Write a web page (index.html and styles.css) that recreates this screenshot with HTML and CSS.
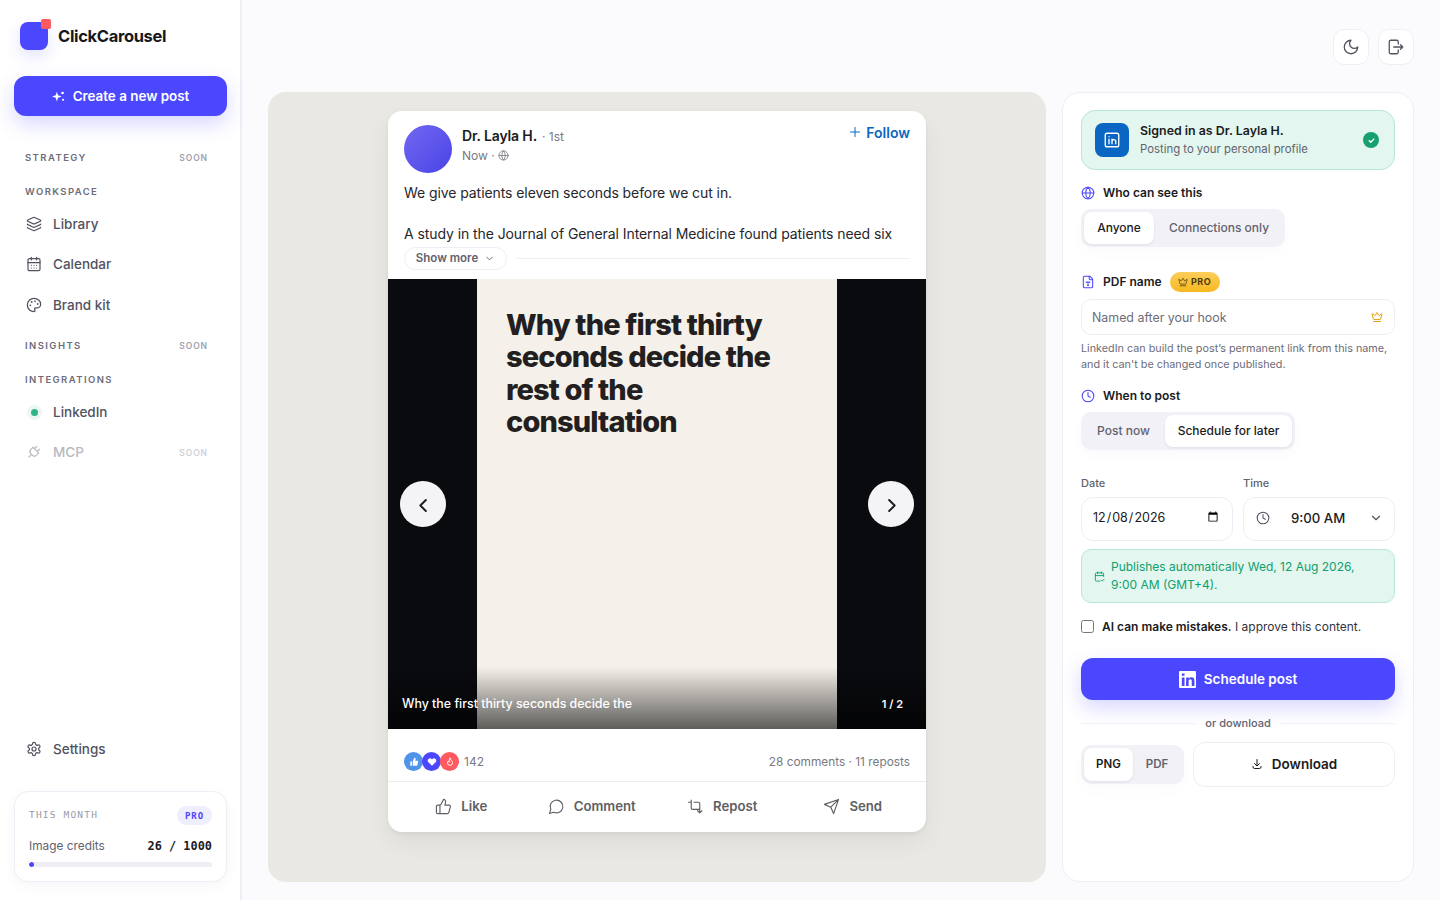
FILE: index.html
```html
<!DOCTYPE html>
<html lang="en">
<head>
<meta charset="utf-8">
<title>ClickCarousel</title>
<link rel="stylesheet" href="styles.css">
</head>
<body>
<div class="app">
  <aside class="sidebar">
    <div class="brand">
      <div class="logo"><span class="logo-dot"></span></div>
      <span class="brand-name">ClickCarousel</span>
    </div>
    <button class="create-btn">
      <svg class="ic14" viewBox="0 0 24 24"><path d="M9 3l2.100 6.900L18 12l-6.900 2.100L9 21l-2.100-6.900L0 12l6.900-2.100z"/><circle cx="19.500" cy="5.500" r="2.400"/><circle cx="20.500" cy="18" r="2"/></svg>
      Create a new post
    </button>
    <div class="section first"><span>STRATEGY</span><em>SOON</em></div>
    <div class="section"><span>WORKSPACE</span></div>
    <nav class="nav nav-work">
      <a class="nav-item">
        <svg class="nav-ic" viewBox="0 0 24 24"><path d="M12.830 2.180a2 2 0 0 0-1.660 0L2.600 6.080a1 1 0 0 0 0 1.830l8.580 3.910a2 2 0 0 0 1.660 0l8.580-3.900a1 1 0 0 0 0-1.830z"/><path d="M2 12a1 1 0 0 0 .58.91l8.600 3.910a2 2 0 0 0 1.650 0l8.580-3.900A1 1 0 0 0 22 12"/><path d="M2 17a1 1 0 0 0 .58.91l8.600 3.910a2 2 0 0 0 1.650 0l8.580-3.900A1 1 0 0 0 22 17"/></svg>
        Library</a>
      <a class="nav-item">
        <svg class="nav-ic" viewBox="0 0 24 24"><path d="M8 2v4M16 2v4"/><rect x="3" y="4" width="18" height="18" rx="2"/><path d="M3 10h18M8 14h.01M12 14h.01M16 14h.01M8 18h.01M12 18h.01M16 18h.01"/></svg>
        Calendar</a>
      <a class="nav-item">
        <svg class="nav-ic" viewBox="0 0 24 24"><circle cx="13.500" cy="6.500" r=".5"/><circle cx="17.500" cy="10.500" r=".5"/><circle cx="8.500" cy="7.500" r=".5"/><circle cx="6.500" cy="12.500" r=".5"/><path d="M12 2C6.500 2 2 6.500 2 12s4.500 10 10 10c.926 0 1.648-.746 1.648-1.688 0-.437-.18-.835-.437-1.125-.29-.289-.438-.652-.438-1.125a1.640 1.640 0 0 1 1.668-1.668h1.996c3.051 0 5.555-2.503 5.555-5.554C21.965 6.012 17.461 2 12 2z"/></svg>
        Brand kit</a>
    </nav>
    <div class="section gap-top"><span>INSIGHTS</span><em>SOON</em></div>
    <div class="section"><span>INTEGRATIONS</span></div>
    <nav class="nav nav-int">
      <a class="nav-item"><span class="dot-wrap"><span class="live-dot"></span></span>LinkedIn</a>
      <a class="nav-item disabled">
        <svg class="nav-ic" viewBox="0 0 24 24"><g transform="rotate(45 12 12)"><path d="M12 23v-6M9 8V3M15 8V3M18 8v5a4 4 0 0 1-4 4h-4a4 4 0 0 1-4-4V8Z"/></g></svg>
        MCP<em>SOON</em></a>
    </nav>
    <a class="nav-item settings">
      <svg class="nav-ic" viewBox="0 0 24 24"><path d="M12.220 2h-.44a2 2 0 0 0-2 2v.18a2 2 0 0 1-1 1.730l-.43.25a2 2 0 0 1-2 0l-.15-.08a2 2 0 0 0-2.730.73l-.22.38a2 2 0 0 0 .73 2.730l.15.1a2 2 0 0 1 1 1.720v.51a2 2 0 0 1-1 1.740l-.15.09a2 2 0 0 0-.73 2.730l.22.38a2 2 0 0 0 2.730.73l.15-.08a2 2 0 0 1 2 0l.43.25a2 2 0 0 1 1 1.730V20a2 2 0 0 0 2 2h.44a2 2 0 0 0 2-2v-.18a2 2 0 0 1 1-1.730l.43-.25a2 2 0 0 1 2 0l.15.08a2 2 0 0 0 2.730-.73l.22-.39a2 2 0 0 0-.73-2.730l-.15-.08a2 2 0 0 1-1-1.740v-.5a2 2 0 0 1 1-1.740l.15-.09a2 2 0 0 0 .73-2.730l-.22-.38a2 2 0 0 0-2.730-.73l-.15.08a2 2 0 0 1-2 0l-.43-.25a2 2 0 0 1-1-1.730V4a2 2 0 0 0-2-2z"/><circle cx="12" cy="12" r="3"/></svg>
      Settings</a>
    <div class="usage">
      <div class="usage-top"><span class="usage-month">THIS MONTH</span><span class="usage-pro">PRO</span></div>
      <div class="usage-row"><span>Image credits</span><b>26 / 1000</b></div>
      <div class="bar"><div class="bar-fill" style="width:2.6%"></div></div>
    </div>
  </aside>

  <main class="main">
    <header class="topbar">
      <button class="icon-btn"><svg viewBox="0 0 24 24"><path d="M12 3a6 6 0 0 0 9 9 9 9 0 1 1-9-9Z"/></svg></button>
      <button class="icon-btn"><svg viewBox="0 0 24 24"><path d="M15 8V5a2 2 0 0 0-2-2H5a2 2 0 0 0-2 2v14a2 2 0 0 0 2 2h8a2 2 0 0 0 2-2v-3M9 12h12M18 9l3 3-3 3"/></svg></button>
    </header>
    <div class="workspace">
      <section class="stage">
        <article class="post">
          <div class="post-head">
            <div class="avatar"></div>
            <div class="author">
              <div class="author-name"><b>Dr. Layla H.</b><span>· 1st</span></div>
              <div class="author-meta">Now ·
                <svg viewBox="0 0 24 24"><circle cx="12" cy="12" r="10"/><path d="M12 2a14.500 14.500 0 0 0 0 20 14.500 14.500 0 0 0 0-20M2 12h20"/></svg>
              </div>
            </div>
            <div class="follow"><svg viewBox="0 0 24 24"><path d="M12 3v18M3 12h18"/></svg>Follow</div>
          </div>
          <div class="post-text">We give patients eleven seconds before we cut in.<br><br>A study in the Journal of General Internal Medicine found patients need six</div>
          <div class="more-row">
            <span class="more-pill">Show more <svg viewBox="0 0 24 24"><path d="m6 9 6 6 6-6"/></svg></span>
            <span class="more-line"></span>
          </div>
          <div class="media">
            <div class="slide"><h2>Why the first thirty seconds decide the rest of the consultation</h2></div>
            <div class="media-shade"></div>
            <span class="caption">Why the first thirty seconds decide the</span>
            <span class="count">1 / 2</span>
            <button class="arrow arrow-l"><svg viewBox="0 0 24 24"><path d="m15 5-7 7 7 7"/></svg></button>
            <button class="arrow arrow-r"><svg viewBox="0 0 24 24"><path d="m9 5 7 7-7 7"/></svg></button>
          </div>
          <div class="stats">
            <div class="reactions">
              <span class="rx rx-blue"><svg viewBox="0 0 24 24"><path d="M3 11h4v10H3zM9 10l4-8c1.800 0 3 1.300 3 3l-1 4h5a2 2 0 0 1 2 2.500l-2 8a2 2 0 0 1-2 1.500H9z" fill="#fff"/></svg></span>
              <span class="rx rx-indigo"><svg viewBox="0 0 24 24"><path d="M12 21 3.500 12.500a5.300 5.300 0 0 1 7.500-7.500l1 1 1-1a5.300 5.300 0 0 1 7.500 7.500z" fill="#fff"/></svg></span>
              <span class="rx rx-red"><svg viewBox="0 0 24 24"><path d="M12 3c1 4 6 6 6 11a6 6 0 0 1-12 0c0-2 1-3.500 2-4.500.5 2 1.500 2.500 2 2.500 0-3 .5-6 2-9z" fill="none" stroke="#fff" stroke-width="2.200"/></svg></span>
              <span class="rx-count">142</span>
            </div>
            <span class="stats-right">28 comments · 11 reposts</span>
          </div>
          <div class="actions">
            <div class="action"><svg viewBox="0 0 24 24"><path d="M7 10v12M15 5.880 14 10h5.830a2 2 0 0 1 1.920 2.560l-2.330 8A2 2 0 0 1 17.500 22H4a2 2 0 0 1-2-2v-8a2 2 0 0 1 2-2h2.760a2 2 0 0 0 1.790-1.110L12 2a3.130 3.130 0 0 1 3 3.880Z"/></svg>Like</div>
            <div class="action"><svg viewBox="0 0 24 24"><path d="M7.900 20A9 9 0 1 0 4 16.100L2 22Z"/></svg>Comment</div>
            <div class="action"><svg viewBox="0 0 24 24"><path d="M2 6h4M6 3v11a2 2 0 0 0 2 2h9M10 6h6a2 2 0 0 1 2 2v13M15 18l3 3 3-3"/></svg>Repost</div>
            <div class="action"><svg viewBox="0 0 24 24"><path d="m22 2-7 20-4-9-9-4ZM22 2 11 13"/></svg>Send</div>
          </div>
        </article>
      </section>

      <section class="panel">
        <div class="signed">
          <div class="li-tile"><svg viewBox="0 0 24 24"><rect x="3" y="3" width="18" height="18" rx="2.500"/><path d="M8 11v6M8 7.500v.01M12 17v-6M12 14a2.500 2.500 0 0 1 5 0v3"/></svg></div>
          <div class="signed-text"><b>Signed in as Dr. Layla H.</b><span>Posting to your personal profile</span></div>
          <div class="ok"><svg viewBox="0 0 24 24"><path d="m7 12.500 3.500 3.500L17 9"/></svg></div>
        </div>

        <div class="label label-who"><svg viewBox="0 0 24 24"><circle cx="12" cy="12" r="10"/><path d="M12 2a14.500 14.500 0 0 0 0 20 14.500 14.500 0 0 0 0-20M2 12h20"/></svg>Who can see this</div>
        <div class="seg seg-who"><span class="seg-item on">Anyone</span><span class="seg-item">Connections only</span></div>

        <div class="label label-pdf"><svg viewBox="0 0 24 24"><path d="M15 2H6a2 2 0 0 0-2 2v16a2 2 0 0 0 2 2h12a2 2 0 0 0 2-2V7ZM14 2v4a2 2 0 0 0 2 2h4M9 13v-1h6v1M12 12v6M11 18h2"/></svg>PDF name
          <span class="pro-badge"><svg viewBox="0 0 24 24"><path d="M11.562 3.266a.5.5 0 0 1 .876 0L15.390 8.870a1 1 0 0 0 1.516.294L21.183 5.500a.5.5 0 0 1 .798.519l-2.834 10.246a1 1 0 0 1-.956.734H5.810a1 1 0 0 1-.957-.734L2.020 6.020a.5.5 0 0 1 .798-.519l4.276 3.664a1 1 0 0 0 1.516-.294zM5 21h14"/></svg>PRO</span></div>
        <div class="text-input"><span>Named after your hook</span><svg viewBox="0 0 24 24"><path d="M11.562 3.266a.5.5 0 0 1 .876 0L15.390 8.870a1 1 0 0 0 1.516.294L21.183 5.500a.5.5 0 0 1 .798.519l-2.834 10.246a1 1 0 0 1-.956.734H5.810a1 1 0 0 1-.957-.734L2.020 6.020a.5.5 0 0 1 .798-.519l4.276 3.664a1 1 0 0 0 1.516-.294zM5 21h14"/></svg></div>
        <p class="hint">LinkedIn can build the post’s permanent link from this name, and it can't be changed once published.</p>

        <div class="label label-when"><svg viewBox="0 0 24 24"><circle cx="12" cy="12" r="10"/><path d="M12 6v6l4 2"/></svg>When to post</div>
        <div class="seg seg-when"><span class="seg-item">Post now</span><span class="seg-item on">Schedule for later</span></div>

        <div class="datetime">
          <div class="field">
            <label class="field-label">Date</label>
            <input class="date-input" type="date" value="2026-12-08">
          </div>
          <div class="field">
            <label class="field-label">Time</label>
            <div class="time-box">
              <svg class="time-clock" viewBox="0 0 24 24"><circle cx="12" cy="12" r="10"/><path d="M12 6v6l4 2"/></svg>
              <span>9:00 AM</span>
              <svg class="time-chev" viewBox="0 0 24 24"><path d="m6 9 6 6 6-6"/></svg>
            </div>
          </div>
        </div>

        <div class="notice">
          <svg viewBox="0 0 24 24"><path d="M8 2v4M16 2v4M21 12V6a2 2 0 0 0-2-2H5a2 2 0 0 0-2 2v14a2 2 0 0 0 2 2h8M3 10h18M16 20l2 2 4-4"/></svg>
          <span>Publishes automatically Wed, 12 Aug 2026, 9:00 AM (GMT+4).</span>
        </div>

        <label class="approve"><input type="checkbox"><span><b>AI can make mistakes.</b> I approve this content.</span></label>

        <button class="schedule">
          <svg viewBox="0 0 24 24"><rect x="0" y="0" width="24" height="24" rx="1.500" fill="#fff"/><path d="M4 3.500h3.800v3.300H4zM4 9h3.800v12H4zM10.200 9h3.600v1.700c.8-1.200 2.100-2 3.800-2 3.200 0 4.200 2.100 4.200 5.100V21h-3.800v-6.300c0-1.600-.4-2.900-2-2.900-1.700 0-2.400 1.200-2.400 2.900V21h-3.800z" fill="#4b47ff"/></svg>
          Schedule post
        </button>

        <div class="or"><span>or download</span></div>

        <div class="export">
          <div class="seg seg-fmt"><span class="seg-item on">PNG</span><span class="seg-item">PDF</span></div>
          <button class="download"><svg viewBox="0 0 24 24"><path d="M12 3v12M7 11l5 5 5-5M4 17v1a3 3 0 0 0 3 3h10a3 3 0 0 0 3-3v-1"/></svg>Download</button>
        </div>
      </section>
    </div>
  </main>
</div>
</body>
</html>
```

FILE: styles.css
```css
* { box-sizing: border-box; }
html, body { margin: 0; padding: 0; height: 100%; }
body {
  font-family: Inter, "Noto Sans", "Liberation Sans", sans-serif;
  background: #fbfbfe;
  color: #1b1b22;
  overflow: hidden;
}
button { font-family: inherit; border: 0; cursor: pointer; }
svg { fill: none; stroke: currentColor; stroke-width: 2; stroke-linecap: round; stroke-linejoin: round; flex: none; }

.app { display: flex; width: 1440px; height: 900px; }

/* Sidebar */
.sidebar {
  width: 242px; flex: none; height: 900px;
  background: #fff; border-right: 2px solid #eeeef6;
  padding: 22px 13px 18px 14px;
  display: flex; flex-direction: column;
}
.brand { display: flex; align-items: center; gap: 10px; height: 28px; padding-left: 6px; }
.logo {
  width: 28px; height: 28px; border-radius: 8px; background: #4b47ff; position: relative;
  box-shadow: 0 6px 16px rgba(75, 71, 255, .16);
}
.logo-dot { position: absolute; width: 10px; height: 10px; right: -3px; top: -3px; border-radius: 2px; background: #ff5a5f; }
.brand-name { font-size: 16.5px; font-weight: 700; letter-spacing: -.02em; color: #17171c; padding-bottom: 1px; }
.create-btn {
  margin-top: 26px; height: 40px; width: 213px; border-radius: 12px;
  background: #4b47ff; color: #fff; font-size: 13.4px; font-weight: 600;
  display: flex; align-items: center; justify-content: center; gap: 8px;
  box-shadow: 0 8px 20px rgba(75, 71, 255, .22);
}
.ic14 { width: 13px; height: 13px; stroke: none; fill: #fff; }
.section {
  height: 14px; margin-top: 20px; padding: 0 19px 0 11px;
  display: flex; justify-content: space-between; align-items: center;
  font-size: 9.5px; font-weight: 600; letter-spacing: .15em; color: #6c6c7c;
}
.section.first { margin-top: 34px; }
.section.gap-top { margin-top: 15.25px; }
em {
  font-style: normal; font-size: 8.5px; font-weight: 600; letter-spacing: .11em; color: #a0a0ac; padding-top: 1px;
}
.nav { display: flex; flex-direction: column; margin-top: 8px; }
.nav-work { margin-top: 7.75px; gap: 4.5px; }
.nav-int { gap: 4px; }
.nav-item {
  height: 36px; padding: 0 19px 0 12px; display: flex; align-items: center; gap: 11px;
  font-size: 13.5px; font-weight: 500; color: #52525f;
}
.nav-ic { width: 16px; height: 16px; stroke-width: 1.8; }
.dot-wrap { width: 16px; display: flex; justify-content: center; }
.live-dot { width: 7px; height: 7px; border-radius: 50%; background: #2fb585; box-shadow: 0 0 0 4px rgba(47, 181, 133, .1); }
.disabled { color: #b8b8c0; }
.disabled em { margin-left: auto; color: #cfcfd6; }
.settings { margin-top: auto; }
.usage {
  margin-top: 24px; height: 91px; width: 213px; border: 1px solid #eeeef6; border-radius: 14px;
  padding: 14px 14px 0; background: #fff; box-shadow: 0 4px 14px rgba(30, 30, 80, .04);
}
.usage-top { display: flex; justify-content: space-between; align-items: center; height: 19px; }
.usage-month { font-family: "DejaVu Sans Mono", monospace; font-size: 9.5px; letter-spacing: .125em; color: #9a9aa4; padding-bottom: 2px; }
.usage-pro {
  font-family: "DejaVu Sans Mono", monospace; font-size: 9px; font-weight: 700; letter-spacing: .1em;
  color: #4b47ff; background: #eeeefd; border-radius: 10px; height: 19px; padding: 0 8px; display: flex; align-items: center;
}
.usage-row { display: flex; justify-content: space-between; align-items: center; margin-top: 12.5px; height: 16px; font-size: 11.85px; color: #62626e; }
.usage-row b { font-family: "DejaVu Sans Mono", monospace; font-size: 11.9px; color: #1b1b22; }
.bar { margin-top: 8.5px; height: 5px; border-radius: 3px; background: #eeeef4; overflow: hidden; }
.bar-fill { height: 100%; min-width: 5px; border-radius: 3px; background: #4b47ff; }

/* Main */
.main { flex: 1; min-width: 0; padding: 29px 26px 18px; display: flex; flex-direction: column; gap: 27px; }
.topbar { display: flex; justify-content: flex-end; gap: 9px; }
.icon-btn {
  width: 36px; height: 36px; border-radius: 11px; border: 1px solid #eeeef6; background: #fff; color: #52525f;
  display: flex; align-items: center; justify-content: center; padding: 0;
}
.icon-btn svg { width: 18px; height: 18px; stroke-width: 1.7; }
.workspace { flex: 1; display: flex; gap: 16px; min-height: 0; }

/* Stage */
.stage { width: 778px; flex: none; background: #e9e8e3; border-radius: 18px; display: flex; justify-content: center; padding-top: 19px; }
.post {
  width: 538px; height: 721px; background: #fff; border-radius: 14px; overflow: hidden;
  box-shadow: 0 2px 4px rgba(0, 0, 0, .05), 0 10px 24px rgba(0, 0, 0, .06);
  display: flex; flex-direction: column;
}
.post-head { display: flex; padding: 14px 16px 0; height: 62px; }
.avatar { width: 48px; height: 48px; border-radius: 50%; background: linear-gradient(135deg, #7268f2, #4a43e6); }
.author { margin-left: 10px; padding-top: 1px; }
.author-name { display: flex; align-items: baseline; gap: 5px; height: 19.5px; line-height: 20px; }
.author-name b { font-size: 14px; font-weight: 600; color: #1b1b22; letter-spacing: -.01em; }
.author-name span { font-size: 12px; color: #7a7a82; }
.author-meta { display: flex; align-items: center; gap: 3px; font-size: 12px; color: #7a7a82; height: 20px; }
.author-meta svg { width: 11px; height: 11px; stroke-width: 1.8; }
.follow { margin-left: auto; display: flex; align-items: center; gap: 5px; height: 16px; margin-top: -1px; font-size: 14px; font-weight: 600; color: #0a66c2; }
.follow svg { width: 12px; height: 12px; }
.post-text { margin-top: 10px; padding: 0 16px; font-size: 14px; letter-spacing: -.08px; line-height: 20.5px; color: #26262c; height: 61.5px; overflow: hidden; }
.more-row { display: flex; align-items: center; gap: 10px; padding: 0 16px; margin-top: 2.5px; height: 23px; }
.more-pill {
  height: 23px; width: 103px; border: 1px solid #eeeef6; border-radius: 12px; display: flex; align-items: center; justify-content: center; gap: 6px;
  font-size: 11.5px; font-weight: 600; color: #62626e; padding-bottom: 1px;
}
.more-pill svg { width: 11px; height: 11px; }
.more-line { flex: 1; height: 1px; background: #eeeef4; }
.media { position: relative; margin-top: 9px; height: 450px; background: #0a0b0f; display: flex; justify-content: center; flex: none; }
.slide { width: 360px; height: 450px; background: #f5f1ea; padding: 30px 29px; }
.slide h2 { margin: 0; font-size: 29px; line-height: 32.4px; font-weight: 800; letter-spacing: -.03em; color: #231f20; }
.media-shade { position: absolute; left: 0; right: 0; bottom: 0; height: 62px; background: linear-gradient(to bottom, rgba(0,0,0,0), rgba(0,0,0,.62)); }
.caption { position: absolute; left: 14px; bottom: 17px; font-size: 12.4px; line-height: 16px; font-weight: 500; color: #fff; }
.count { position: absolute; right: 23px; bottom: 17px; font-size: 11px; line-height: 16px; font-weight: 600; color: #fff; }
.arrow {
  position: absolute; top: 202px; width: 46px; height: 46px; border-radius: 50%; background: #f4f4f6; color: #1b1b22;
  display: flex; align-items: center; justify-content: center; padding: 2px 0 0;
}
.arrow svg { width: 19px; height: 19px; stroke-width: 2.4; }
.arrow-l { left: 12px; }
.arrow-r { right: 12px; }
.stats { height: 53px; flex: none; border-bottom: 1px solid #ebebeb; padding: 13px 16px 0; display: flex; align-items: center; justify-content: space-between; }
.reactions { display: flex; align-items: center; }
.rx { width: 19px; height: 19px; border-radius: 50%; margin-right: -1px; display: flex; align-items: center; justify-content: center; }
.rx svg { width: 10px; height: 10px; stroke: none; }
.rx-blue { background: #4f94e8; }
.rx-indigo { background: #4b47ff; }
.rx-red { background: #ff5a5f; }
.rx-red svg { stroke: #fff; }
.rx-count { margin-left: 6px; font-size: 12px; color: #7a7a82; }
.stats-right { font-size: 11.85px; color: #7a7a82; }
.actions { height: 50px; padding: 0 8px 2px; display: grid; grid-template-columns: repeat(4, 1fr); }
.action { display: flex; align-items: center; justify-content: center; gap: 9px; font-size: 13.2px; font-weight: 600; color: #5e5e64; }
.action svg { width: 17px; height: 17px; stroke-width: 1.6; }

/* Panel */
.panel { flex: 1; background: #fff; border: 1px solid #eeeef6; border-radius: 18px; padding: 17px 18px; }
.signed {
  height: 60px; background: #e3f6ef; border: 1px solid #b9e8d6; border-radius: 14px;
  display: flex; align-items: center; padding: 0 15px 0 13px; gap: 11px;
}
.li-tile { width: 34px; height: 34px; border-radius: 8px; background: #0a66c2; color: #fff; display: flex; align-items: center; justify-content: center; }
.li-tile svg { width: 18px; height: 18px; stroke-width: 1.8; }
.signed-text { display: flex; flex-direction: column; gap: 3px; flex: 1; }
.signed-text b { font-size: 12.4px; font-weight: 600; line-height: 16px; color: #1b1b22; }
.signed-text span { font-size: 11.35px; line-height: 15px; color: #62626e; }
.ok { width: 16px; height: 16px; border-radius: 50%; background: #16a06e; color: #fff; display: flex; align-items: center; justify-content: center; }
.ok svg { width: 11px; height: 11px; stroke-width: 3; }
.label { display: flex; align-items: center; gap: 8px; font-size: 12px; font-weight: 600; color: #1b1b22; line-height: 16px; }
.label svg { width: 14px; height: 14px; color: #4b47ff; stroke-width: 1.8; }
.label-who { margin-top: 15px; }
.label-pdf { margin-top: 25px; height: 20px; }
.label-when { margin-top: 15px; }
.seg { display: inline-flex; background: #f1f1f7; border-radius: 10px; padding: 3px; box-shadow: 0 6px 16px rgba(30, 30, 80, .02); }
.seg-item { display: flex; align-items: center; justify-content: center; font-size: 12px; font-weight: 500; color: #62626e; border-radius: 8px; padding-bottom: 1px; }
.seg-item.on { background: #fff; color: #1b1b22; box-shadow: 0 1px 3px rgba(30, 30, 80, .08); }
.seg-who { margin-top: 8px; height: 38px; }
.seg-who .seg-item:first-child { width: 70px; }
.seg-who .seg-item:last-child { width: 128px; padding-left: 2px; }
.seg-when { margin-top: 8px; height: 38px; }
.seg-when .seg-item:first-child { width: 81px; padding-right: 2px; }
.seg-when .seg-item:last-child { width: 127px; }
.pro-badge {
  display: flex; align-items: center; gap: 3px; height: 20px; width: 50px; justify-content: center; border-radius: 10px;
  background: linear-gradient(#fdcd5b, #f8b91f);
  font-size: 9px; font-weight: 700; letter-spacing: .06em; color: #4a3a10;
}
.label .pro-badge svg { width: 10px; height: 10px; color: #4a3a10; }
.text-input {
  margin-top: 7px; height: 36px; border: 1px solid #eeeef6; border-radius: 10px; padding: 0 11px 0 10px;
  display: flex; align-items: center; justify-content: space-between; font-size: 12.4px; color: #6c6c78;
}
.text-input svg { width: 12px; height: 12px; color: #e5a50f; }
.hint { margin: 6px 0 0; font-size: 10.8px; line-height: 16px; color: #6c6c78; }
.datetime { margin-top: 25px; display: grid; grid-template-columns: 152px 152px; gap: 10px; }
.field { display: flex; flex-direction: column; gap: 6px; }
.field-label { font-size: 11px; line-height: 16px; font-weight: 500; color: #62626e; }
.date-input {
  height: 44px; width: 152px; border: 1px solid #eeeef6; border-radius: 12px; background: #fff; padding: 0 11px 3px 10px;
  font-family: inherit; font-size: 12.5px; color: #1b1b22; outline: none;
}
.time-box {
  height: 44px; border: 1px solid #eeeef6; border-radius: 12px; display: flex; align-items: center; padding: 0 11px 2px 12px; font-size: 13.2px; font-weight: 500; color: #1b1b22;
}
.time-clock { width: 14px; height: 14px; color: #52525f; margin-right: 21px; stroke-width: 1.8; }
.time-chev { width: 14px; height: 14px; color: #52525f; margin-left: auto; }
.notice {
  margin-top: 8px; height: 54px; background: #e3f6ef; border: 1px solid #b9e8d6; border-radius: 10px; padding: 0 24px 0 12px;
  display: flex; align-items: center; gap: 6px; font-size: 12px; line-height: 18px; color: #10a06e;
}
.notice svg { width: 11px; height: 11px; }
.approve { margin-top: 15px; display: flex; align-items: center; gap: 8px; height: 16px; font-size: 12px; color: #33333b; }
.approve input { margin: 0; width: 13px; height: 13px; }
.approve b { font-weight: 600; color: #1b1b22; }
.schedule {
  margin-top: 24px; width: 100%; height: 42px; border-radius: 12px; background: #4b47ff; color: #fff; font-size: 13.5px; font-weight: 600;
  display: flex; align-items: center; justify-content: center; gap: 8px;
  box-shadow: 0 8px 20px rgba(75, 71, 255, .22);
}
.schedule svg { width: 17px; height: 17px; stroke: none; }
.or { margin-top: 16px; height: 14px; display: flex; align-items: center; gap: 10px; font-size: 11px; font-weight: 500; color: #62626e; }
.or::before, .or::after { content: ""; flex: 1; height: 1px; background: #f0f0f5; }
.export { margin-top: 12px; display: flex; align-items: center; gap: 9px; }
.seg-fmt { height: 39px; width: 103px; flex: none; }
.seg-fmt .seg-item { font-weight: 600; font-size: 11.5px; }
.seg-fmt .seg-item:first-child { width: 49px; }
.seg-fmt .seg-item:last-child { flex: 1; }
.download {
  flex: 1; height: 45px; border: 1px solid #eeeef6; border-radius: 12px; background: #fff; color: #1b1b22; font-size: 13.5px; font-weight: 600;
  display: flex; align-items: center; justify-content: center; gap: 9px; padding: 0 0 2px;
}
.download svg { width: 12px; height: 12px; }
```
